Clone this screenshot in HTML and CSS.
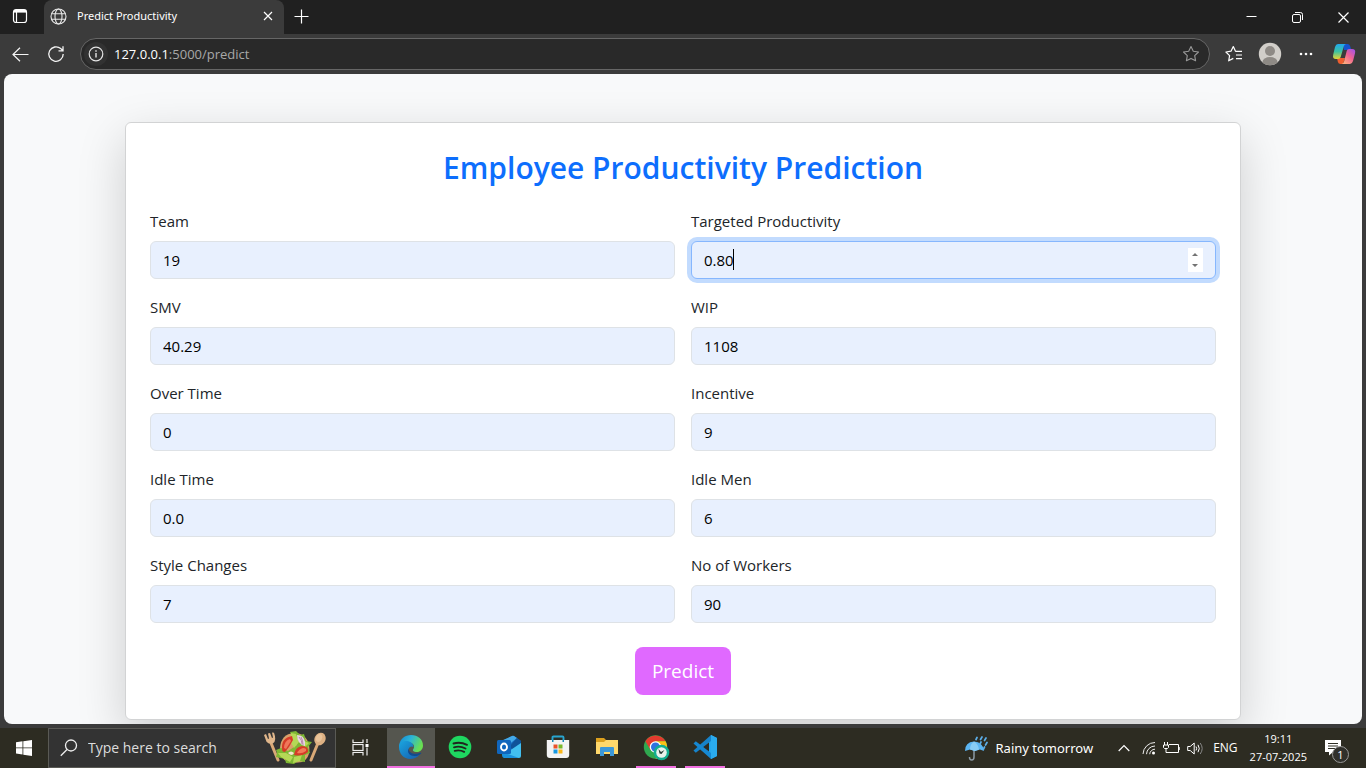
FILE: index.html
```html
<!DOCTYPE html>
<html lang="en">
<head>
<meta charset="utf-8">
<title>Predict Productivity</title>
<link rel="stylesheet" href="styles.css">
</head>
<body>
<header class="browser">
  <div class="tabstrip">
    <button class="tab-actions" aria-label="Tab actions"><svg width="16" height="16" viewBox="0 0 16 16" fill="none" stroke="#fff" stroke-width="1.2"><rect x="1.5" y="1.5" width="13" height="13" rx="2.5"/><path d="M2 3.300h12" stroke-width="2.600"/><path d="M4.500 4v10.500"/></svg></button>
    <div class="tab">
      <svg width="17" height="17" viewBox="0 0 17 17" fill="none" stroke="#e8e8e8" stroke-width="1.100"><circle cx="8.500" cy="8.500" r="7.500"/><ellipse cx="8.500" cy="8.500" rx="3.500" ry="7.500"/><path d="M1.500 5.800h14M1.500 11.200h14"/></svg>
      <span class="tab-title">Predict Productivity</span>
      <button class="tab-close" aria-label="Close tab"><svg width="10" height="10" viewBox="0 0 10 10" stroke="#fff" stroke-width="1.200"><path d="M1 1l8 8M9 1l-8 8"/></svg></button>
    </div>
    <button class="new-tab" aria-label="New tab"><svg width="15" height="15" viewBox="0 0 15 15" stroke="#fff" stroke-width="1.200"><path d="M7.500.5v14M.5 7.500h14"/></svg></button>
    <div class="window-controls">
      <button aria-label="Minimize"><svg width="11" height="11" viewBox="0 0 11 11" stroke="#fff"><path d="M.5 4.500h10"/></svg></button>
      <button aria-label="Restore"><svg width="11" height="11" viewBox="0 0 11 11" fill="none" stroke="#fff"><rect x=".5" y="2.500" width="8" height="8" rx="1.500"/><path d="M3 .5h5.500a2 2 0 0 1 2 2V8"/></svg></button>
      <button aria-label="Close"><svg width="11" height="11" viewBox="0 0 11 11" stroke="#fff" stroke-width="1.200"><path d="M.5.5l10 10M10.500.5l-10 10"/></svg></button>
    </div>
  </div>
  <div class="toolbar">
    <button class="nav-button" aria-label="Back"><svg width="17" height="15" viewBox="0 0 17 15" fill="none" stroke="#f4f4f4" stroke-width="1.200"><path d="M16.500 7.500H1M8 .7L1 7.500l7 6.800"/></svg></button>
    <button class="nav-button" aria-label="Refresh"><svg width="18" height="18" viewBox="0 0 18 18" fill="none" stroke="#f4f4f4" stroke-width="1.300"><path d="M16.200 9A7.200 7.200 0 1 1 13.700 3.600L16 5.700M16 1.300v4.500h-4.500"/></svg></button>
    <div class="address">
      <span class="site-info"><svg width="16" height="16" viewBox="0 0 16 16" fill="none" stroke="#e4e4e4" stroke-width="1.200"><circle cx="8" cy="8" r="6.800"/><path d="M8 7v4.500M8 4.300v1.500" stroke-width="1.400"/></svg></span>
      <span class="url"><b>127.0.0.1</b>:5000/predict</span>
      <button class="star" aria-label="Add to favorites"><svg width="18" height="18" viewBox="0 0 18 18" fill="none" stroke="#999" stroke-width="1.100" stroke-linejoin="round"><path d="M9 1.500l2.300 4.700 5.200.8-3.800 3.600.9 5.200L9 13.400l-4.600 2.400.9-5.200L1.500 7l5.200-.8z"/></svg></button>
    </div>
    <div class="tools">
      <button aria-label="Favorites"><svg width="18" height="18" viewBox="0 0 18 18" fill="none" stroke="#fff" stroke-width="1.200" stroke-linejoin="round"><path d="M10.500 6.200L8.300 1.500 6 6.200.9 7l3.700 3.600-.9 5.200L8.300 13.400M10.300 6.300H17M11 10h6M11 13.700h6"/></svg></button>
      <button aria-label="Profile"><svg width="24" height="24" viewBox="0 0 24 24"><defs><clipPath id="avatar"><circle cx="12" cy="12" r="11.200"/></clipPath></defs><circle cx="12" cy="12" r="11.200" fill="#d1cec9"/><g clip-path="url(#avatar)" fill="#8e8a85"><circle cx="12" cy="9" r="5"/><ellipse cx="12" cy="20" rx="7.500" ry="5"/></g></svg></button>
      <button aria-label="More"><svg width="14" height="4" viewBox="0 0 14 4" fill="#fff"><circle cx="2" cy="2" r="1.300"/><circle cx="7" cy="2" r="1.300"/><circle cx="12" cy="2" r="1.300"/></svg></button>
      <button aria-label="Copilot"><svg width="24" height="22" viewBox="0 0 24 22"><defs><linearGradient id="cop1" x1="0" y1="0" x2="0" y2="1"><stop offset="0" stop-color="#21a8ee"/><stop offset=".5" stop-color="#3cc2a1"/><stop offset="1" stop-color="#e6d534"/></linearGradient><linearGradient id="cop2" x1="1" y1="0" x2=".2" y2="1"><stop offset="0" stop-color="#9b50ee"/><stop offset=".5" stop-color="#f06292"/><stop offset="1" stop-color="#ffb17d"/></linearGradient></defs><path d="M11 1h4.500q2 0 2.600 2l1.200 4H12z" fill="#1552cd"/><path d="M5 15h8l-2 6H8.500q-2 0-2.600-2z" fill="#ef5e2f"/><path d="M6 1h8q-1.600.3-2.200 2.300L8.700 14q-.6 2-2.700 2H4q-3.800 0-2.800-4.200L3 4q.8-3 3-3z" fill="url(#cop1)"/><path d="M17 6h3q4 0 3 4.200L21 18q-.8 3-3 3H9.500q1.900-.3 2.500-2.300L14.700 8q.5-2 2.300-2z" fill="url(#cop2)"/></svg></button>
    </div>
  </div>
</header>

<main class="viewport">
  <div class="container">
    <section class="card">
      <h1 class="heading">Employee Productivity Prediction</h1>
      <form class="form">
        <div class="grid">
          <div class="field"><label for="team">Team</label><input id="team" value="19"></div>
          <div class="field"><label for="target">Targeted Productivity</label>
            <div class="number">
              <input id="target" class="focused" value="0.80">
              <span class="caret"></span>
              <span class="spinner"><svg width="15" height="24" viewBox="0 0 15 24" fill="#737373"><path d="M4 8l3-3 3 3zM4 16l3 3 3-3z"/></svg></span>
            </div>
          </div>
          <div class="field"><label for="smv">SMV</label><input id="smv" value="40.29"></div>
          <div class="field"><label for="wip">WIP</label><input id="wip" value="1108"></div>
          <div class="field"><label for="overtime">Over Time</label><input id="overtime" value="0"></div>
          <div class="field"><label for="incentive">Incentive</label><input id="incentive" value="9"></div>
          <div class="field"><label for="idletime">Idle Time</label><input id="idletime" value="0.0"></div>
          <div class="field"><label for="idlemen">Idle Men</label><input id="idlemen" value="6"></div>
          <div class="field"><label for="style">Style Changes</label><input id="style" value="7"></div>
          <div class="field"><label for="workers">No of Workers</label><input id="workers" value="90"></div>
        </div>
        <button class="predict" type="button">Predict</button>
      </form>
    </section>
  </div>
</main>

<footer class="taskbar">
  <button class="start" aria-label="Start"><svg width="16" height="16" viewBox="0 0 16 16" fill="#fff"><path d="M0 2.200l6.500-.9v6.200H0zM7.300 1.200L16 0v7.500H7.300zM0 8.300h6.500v6.200L0 13.600zM7.300 8.300H16V16l-8.700-1.200z"/></svg></button>
  <label class="search">
    <svg width="18" height="18" viewBox="0 0 18 18" fill="none" stroke="#eee" stroke-width="1.300"><circle cx="11" cy="6.500" r="5.500"/><path d="M7 10.500L.8 16.800"/></svg>
    <input type="text" placeholder="Type here to search" aria-label="Search">
    <svg class="salad" width="64" height="34" viewBox="0 0 64 34"><g stroke="#d9a877" stroke-linecap="round"><path d="M8 12l7 17" stroke-width="3"/><path d="M55 12l-7 17" stroke-width="3"/></g><path d="M1 4l2-1 2 5 1-.5-1-5 2-.5 2 5 1-.5-1-5 2 .3q3 8-1 10.500-4 1.500-6.500-1.500z" fill="#e0b68b"/><ellipse cx="57" cy="8" rx="5.500" ry="6.500" transform="rotate(25 57 8)" fill="#ddb083"/><ellipse cx="56" cy="7" rx="3" ry="4" transform="rotate(25 56 7)" fill="#e9c39a"/><path d="M17 17Q18 3 31 2q12 0 15 12 2 13-7 17-15 3-20-5z" fill="#d9a06a"/><path d="M27 1l6-1 4 4 4-1 2 7 6 1-4 5 2 6-5 2v7l-7-1-4 3-8-1-1-4-9-2 1-4-1-3 5-2 7 3 9-6z" fill="#7eb733"/><path d="M28 2l5 1 3 8-5 6-4-7zM39 9l7 3-4 4zM15 22l8 0 7 4-3 5-9-5zM31 26l8-2-2 6-7 2z" fill="#b5d856"/><path d="M19 18Q18 7 29 5l1 4-4 7-4 5q-3 0-3-3z" fill="#d63b28"/><path d="M21 17q0-7 6-9l1 2-5 8z" fill="#f0775a"/><path d="M31 24q1-8 8-9 7 0 6 6-6 5-14 3z" fill="#d63b28"/><path d="M34 22q2-4 6-5 4 0 3 3-4 3-9 2z" fill="#f17c58"/><path d="M34 4q7 0 8 7v4q-8-2-8-11z" fill="#ead4e5"/><path d="M36 6q3 3 3 7M38 6q2 3 2 8" stroke="#ac769b" fill="none" stroke-width=".8"/><path d="M25 22q3-3 6 0-2 4-6 0z" fill="#f6e3cf"/></svg>
  </label>
  <div class="apps">
    <button class="app" aria-label="Task view"><svg width="17" height="17" viewBox="0 0 17 17" fill="none" stroke="#eee" stroke-width="1.200"><path d="M1 .5v3h10v-3M1 16.500v-3h10v3"/><rect x="1" y="5.500" width="10" height="6"/><path d="M15 0v4M15 8.500v8"/><path d="M13.500 5h3v3h-3z" fill="#fff" stroke="none"/></svg></button>
    <button class="app active" aria-label="Microsoft Edge"><svg width="26" height="26" viewBox="0 0 26 26"><defs><linearGradient id="edge1" x1="0" x2="1" y1="0" y2=".4"><stop stop-color="#1387d5"/><stop offset=".5" stop-color="#2bb4d8"/><stop offset="1" stop-color="#69df52"/></linearGradient><linearGradient id="edge2" y2="1"><stop stop-color="#1aa5df"/><stop offset="1" stop-color="#155cac"/></linearGradient></defs><path d="M1 12C2 4.500 7 1 13 1c7 0 12 4.500 12 10.500 0 4-3 6.500-6 6.500-3.500 0-5-1.500-3.500-3.200 1.500-2.300 0-6.300-4.500-6.300-5 0-9 1.500-10 5z" fill="url(#edge1)"/><path d="M1 13c0-4.500 4-6.500 8-6 4 .5 6.500 3 6.500 6-1-1-4-1-5 2-1 5 4 8 11 5.500-2.500 3.500-6 4.500-9 4.500-7 0-11.500-5.500-11.500-12z" fill="url(#edge2)"/><path d="M10.500 14.500c-2 5 2.500 9 9.500 7q1.500-.5 3-2c.7-.6 0-1-.6-.7-6.400 2.700-11.900-.3-11.900-4.300z" fill="#114b8f"/></svg></button>
    <button class="app" aria-label="Spotify"><svg width="24" height="24" viewBox="0 0 24 24"><circle cx="12" cy="12" r="11.300" fill="#1ed760"/><path d="M5.500 8.500q7-2 13.500 1.300M6 12.300q6-1.700 11.500 1.200M6.700 15.800q5-1.300 9.500 1" fill="none" stroke="#20261f" stroke-width="1.900" stroke-linecap="round"/></svg></button>
    <button class="app" aria-label="Outlook"><svg width="26" height="24" viewBox="0 0 26 24"><path d="M6 6l10-5q1-.5 2 0l7 5v7L7 20z" fill="#1769bd"/><path d="M6 5.500L16 1q1-.5 2 0l3 2-11 9z" fill="#43a9e8"/><path d="M14 11l7-8 4 3v4l-8 6z" fill="#0f5299"/><path d="M7 20l18-12v13q0 2-2 2H9q-2 0-2-3z" fill="#42bff0"/><path d="M6 17l17 6H9q-3 0-3-3z" fill="#1a91dc"/><rect x="1" y="5" width="14" height="14" rx="1.500" fill="#1066bd"/><ellipse cx="8" cy="12" rx="3" ry="3.500" fill="none" stroke="#fff" stroke-width="1.900"/></svg></button>
    <button class="app" aria-label="Microsoft Store"><svg width="24" height="24" viewBox="0 0 24 24"><path d="M6.500 6V2.500Q6.500 1.500 7.500 1.500h9q1 0 1 1V6" fill="none" stroke="#28a5cf" stroke-width="1.900"/><path d="M.8 5h22.400v15q0 3-3 3H3.800q-3 0-3-3z" fill="#f3f3f3"/><path d="M6 5h1.500v2H6zM16.500 5H18v2h-1.500z" fill="#1687b5"/><path d="M7.500 9.500h4v4h-4z" fill="#eb522a"/><path d="M12.500 9.500h4v4h-4z" fill="#79b729"/><path d="M7.500 14.500h4v4h-4z" fill="#1698e2"/><path d="M12.500 14.500h4v4h-4z" fill="#fab719"/></svg></button>
    <button class="app" aria-label="File Explorer"><svg width="24" height="20" viewBox="0 0 24 20"><path d="M1 1h8l2 2h11v7H1z" fill="#dba01e"/><path d="M1 5h8l2-2h12v14H1z" fill="#ffd86b"/><path d="M5 19v-8q0-1 1-1h12q1 0 1 1v8h-4v-4H9v4z" fill="#3c98d8"/></svg></button>
    <button class="app open" aria-label="Chrome"><svg width="27" height="27" viewBox="0 0 27 27"><circle cx="12.500" cy="13" r="11.700" fill="#2fa84f"/><path d="M2.400 7.200A11.700 11.700 0 0 1 22.600 7.200H12.500L7.500 16z" fill="#e33b2e"/><path d="M22.600 7.200A11.700 11.700 0 0 1 12.500 24.700L17.500 16l-5-8.800z" fill="#fbc116"/><circle cx="12.500" cy="13" r="5.800" fill="#fff"/><circle cx="12.500" cy="13" r="4.500" fill="#2f72df"/><circle cx="18.500" cy="18.500" r="7.800" fill="#12ae91"/><circle cx="18.500" cy="18.500" r="5.300" fill="#e8f2ec"/><path d="M15.500 15l2.500 3 3.500-2-3 4-2-.5z" fill="#253b36"/></svg></button>
    <button class="app open" aria-label="Visual Studio Code"><svg width="26" height="26" viewBox="0 0 26 26"><path d="M19 1l6 3v18l-6 3-2-6V7z" fill="#25a8ed"/><path d="M19 1L1.500 16.500l2.300 2.300L19 7z" fill="#1683ca"/><path d="M19 25L1.500 9.500l2.300-2.300L19 19z" fill="#1688d2"/><path d="M19 1l6 3v18l-6 3z" fill="#2aabee"/></svg></button>
  </div>
  <div class="tray">
    <button class="weather"><svg width="25" height="25" viewBox="0 0 25 25"><path d="M10 10v11q0 3-2.300 3t-2.200-3" fill="none" stroke="#8b99a5" stroke-width="1.500"/><path d="M1 15Q1 6 10 5.500 19 6 20 15l-4-1.500L11 15l-5-1.500z" fill="#5bb5f2"/><path d="M6 13.500Q6 8 10 5.500q4 2 5 8L11 15z" fill="#89cdf5"/><path d="M13 1.500l-1 2M18 1l-1.500 2.500M22 2l-1.500 2.500M17 6l-1 2M23 6.500L21.500 9M20.500 11l-1 2" stroke="#5caee8" stroke-width="1.700" stroke-linecap="round"/></svg><span>Rainy tomorrow</span></button>
    <button class="chevron" aria-label="Show hidden icons"><svg width="12" height="8" viewBox="0 0 12 8" fill="none" stroke="#fff" stroke-width="1.200"><path d="M.7 7L6 1.500 11.300 7"/></svg></button>
    <svg width="14" height="14" viewBox="0 0 14 14" fill="none" stroke="#eee"><path d="M1 13A12 12 0 0 1 13 1.500M4.500 13.200A8.500 8.500 0 0 1 13 5M7.700 13.200A5.300 5.300 0 0 1 13 8.200"/><circle cx="11.500" cy="12" r="1.500" fill="#fff" stroke="none"/></svg>
    <svg width="17" height="13" viewBox="0 0 17 13" fill="none" stroke="#fff"><path d="M6 2.500h9.500v8H5.500"/><path d="M16 5v3" stroke-width="1.500"/><path d="M1.500 0v3M4.500 0v3M.5 3h5v2.500l-1 1h-3l-1-1zM3 6.500v4h3"/></svg>
    <svg width="17" height="13" viewBox="0 0 17 13" fill="none" stroke="#fff"><path d="M.7 4.500h2.500l4-3.500v11l-4-3.500H.7zM9 4.500q1.300 2 0 4M11 2.800q2.500 3.700 0 7.400"/><path d="M13.200 1q4 5.500 0 11" stroke="#888"/></svg>
    <span class="lang">ENG</span>
    <time class="clock"><span>19:11</span><span>27-07-2025</span></time>
    <button class="notifications" aria-label="Notifications"><svg width="16" height="16" viewBox="0 0 16 16"><path d="M0 0h16v12h-8l-4 3.500V12H0z" fill="#fff"/><path d="M3 3.500h10M3 6h10M3 8.500h7" stroke="#303026"/></svg><span class="badge">1</span></button>
  </div>
</footer>
</body>
</html>
```
FILE: styles.css
```css
* { box-sizing: border-box; }
body {
  margin: 0;
  height: 100vh;
  display: flex;
  flex-direction: column;
  overflow: hidden;
  background: #3b3b3b;
  color: #212529;
  font: 15px/24px "Open Sans", "Noto Sans", sans-serif;
}
button { padding: 0; border: 0; background: none; color: inherit; font: inherit; }
svg { display: block; flex: none; }
input { font: inherit; }

.tabstrip { display: flex; height: 34px; background: #202020; color: #fff; }
.tab-actions { width: 44px; display: grid; place-items: center; padding: 0 4px 2px 0; }
.tab {
  width: 240px;
  display: flex;
  align-items: center;
  gap: 10px;
  padding: 0 11px 2px 6px;
  background: #3b3b3b;
  border-radius: 8px 8px 0 0;
  font-family: "Noto Sans", sans-serif;
  font-size: 11px;
}
.tab-title { flex: 1; }
.new-tab { padding: 0 10px 2px; }
.window-controls { display: flex; margin-left: auto; }
.window-controls button { width: 46px; display: grid; place-items: center; }

.toolbar { display: flex; align-items: center; height: 40px; padding-right: 2px; color: #fff; }
.nav-button { width: 40px; display: grid; place-items: center; }
.nav-button + .nav-button { width: 32px; }
.address {
  flex: 1;
  display: flex;
  align-items: center;
  gap: 6px;
  height: 32px;
  margin-left: 8px;
  padding: 0 9px 0 3px;
  background: #292929;
  border: 1px solid #666;
  border-radius: 16px;
  font-size: 13px;
}
.site-info { display: grid; place-items: center; width: 24px; height: 24px; border-radius: 50%; background: #323232; }
.url { flex: 1; color: #a8a8a8; }
.url b { color: #fff; font-weight: 400; }
.tools { display: flex; padding-left: 6px; }
.tools button { width: 36px; display: grid; place-items: center; }
.tools button:last-child { width: 40px; }

.viewport { flex: 1; min-height: 0; margin: 0 4px 4px; overflow: hidden; background: #f8f9fa; border-radius: 8px; }
.container { max-width: 1140px; margin: 0 auto; padding: 48px 12px 0; }
.card {
  padding: 24px;
  background: #fff;
  border: 1px solid #d2d3d4;
  border-radius: 6px;
  box-shadow: 0 16px 48px rgba(0, 0, 0, .175);
}
.heading { margin: 0 0 20px; color: #0d6efd; font-size: 30px; line-height: 42px; font-weight: 600; text-align: center; }
.form { display: flex; flex-direction: column; align-items: center; gap: 24px; }
.grid { width: 100%; display: grid; grid-template-columns: 1fr 1fr; gap: 16px; }
.field { display: flex; flex-direction: column; gap: 8px; }
.field input {
  width: 100%;
  height: 38px;
  padding: 6px 12px;
  background: #e8f0fe;
  border: 1px solid #dee2e6;
  border-radius: 6px;
  color: #000;
}
.field .focused { border-color: #86b7fe; box-shadow: 0 0 0 4px #c2dbfe; }
.number { position: relative; }
.caret { position: absolute; left: 42px; top: 8px; width: 1px; height: 21px; background: #000; }
.spinner { position: absolute; right: 13px; top: 7px; background: #fff; }
.predict { height: 48px; padding: 0 17px; border-radius: 8px; background: #e069ff; color: #fff; font-size: 19px; }

.taskbar { display: flex; height: 40px; background: #2d2c22; color: #fff; }
.start { width: 48px; display: grid; place-items: center; }
.search { width: 288px; display: flex; align-items: center; padding: 0 8px 0 11px; background: #333; border: 1px solid #5a5a55; }
.search input { flex: 1; min-width: 0; margin-left: 10px; padding: 0; border: 0; background: none; color: #ddd; font-size: 14px; }
.search input::placeholder { color: #ddd; opacity: 1; }
.apps { display: flex; }
.app { width: 48px; display: grid; place-items: center; border-bottom: 2px solid transparent; margin-right: 1px; }
.app:first-child { width: 48px; margin-right: 3px; }
.app.active { background: #55564f; border-color: #f06fe0; }
.app.open { width: 40px; margin: 0 5px 0 4px; border-color: #f06fe0; }
.tray { display: flex; align-items: center; gap: 7px; margin-left: auto; padding-right: 19px; font-size: 13px; }
.weather { display: flex; align-items: center; gap: 7px; font-family: "Noto Sans", sans-serif; }
.chevron { margin: 0 5px 0 18px; }
.lang { font-size: 12px; margin: 0 5px 0 2px; }
.clock { display: flex; flex-direction: column; align-items: center; font-size: 11px; line-height: 18px; }
.notifications { position: relative; margin: 0 6px 0 11px; }
.badge {
  position: absolute;
  left: 7px;
  top: 6px;
  width: 17px;
  height: 17px;
  border: 1px solid #999;
  border-radius: 50%;
  background: #30302b;
  font-size: 11px;
  line-height: 15px;
}
```
